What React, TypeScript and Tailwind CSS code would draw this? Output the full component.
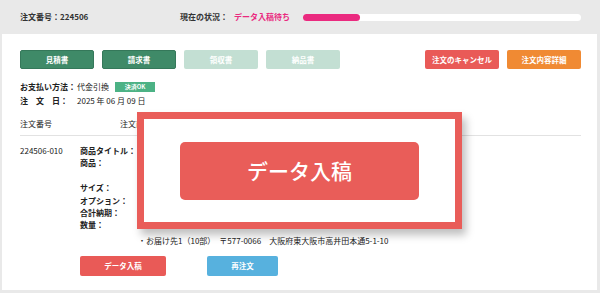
import React from 'react'

const font = { fontFamily: '"Noto Sans CJK JP", "Noto Sans", sans-serif' }

function DocButton({ label, className }: { label: string; className: string }) {
  return (
    <div
      className={`flex h-[19px] w-[74px] items-center justify-center rounded-[2px] text-[7.5px] font-bold text-white ${className}`}
    >
      {label}
    </div>
  )
}

export default function App() {
  return (
    <div
      className="relative flex h-[293px] w-[600px] flex-col bg-[#e9e9e9] text-[#222]"
      style={font}
    >
      {/* Status header */}
      <div className="flex h-[34px] shrink-0 items-center pl-[20px] pr-[19px] text-[8px] font-bold text-[#333]">
        <div className="w-[160px]">注文番号：224506</div>
        <div>現在の状況：</div>
        <div className="ml-[6px] text-[#ea2a7f]">データ入稿待ち</div>
        <div className="ml-[13px] h-[7px] flex-1 rounded-full bg-white">
          <div className="h-full w-[57px] rounded-full bg-[#ea2a7f]" />
        </div>
      </div>

      {/* Order panel */}
      <div className="mb-[3px] ml-[2px] mr-[3px] flex-1 bg-white pl-[18px] pr-[16px] pt-[16px] text-[8px]">
        <div className="flex items-center">
          <div className="flex gap-[8px]">
            <DocButton label="見積書" className="border border-[#35785a] bg-[#3f8a68]" />
            <DocButton label="請求書" className="border border-[#35785a] bg-[#3f8a68]" />
            <DocButton label="領収書" className="bg-[#c3dfd3]" />
            <DocButton label="納品書" className="bg-[#c3dfd3]" />
          </div>
          <div className="ml-auto flex gap-[8px]">
            <DocButton label="注文のキャンセル" className="bg-[#e95a57]" />
            <DocButton label="注文内容詳細" className="bg-[#f08a33]" />
          </div>
        </div>

        <div className="mt-[11px] leading-[14px]">
          <div className="flex items-center">
            <span className="w-[57px] font-bold">お支払い方法：</span>
            <span>代金引換</span>
            <span className="ml-[6px] flex h-[10px] w-[40px] items-center justify-center bg-[#4cb285] text-[6px] font-bold leading-none text-white">
              決済OK
            </span>
          </div>
          <div className="flex">
            <span className="w-[57px] font-bold">注　文　日：</span>
            <span>2025 年 06 月 09 日</span>
          </div>
        </div>

        <div className="mt-[9px] flex border-b border-[#e2e2e2] pb-[4px] leading-[14px]">
          <span className="w-[100px]">注文番号</span>
          <span>注文商品</span>
        </div>

        <div className="mt-[9px] flex leading-[12.4px]">
          <span className="w-[60px]">224506-010</span>
          <div className="font-bold">
            <div>商品タイトル：</div>
            <div>商品：</div>
            <div>&nbsp;</div>
            <div>サイズ：</div>
            <div>オプション：</div>
            <div>合計納期：</div>
            <div>数量：</div>
          </div>
        </div>

        <div className="ml-[118px] mt-[3px] leading-[12px]">
          ・お届け先1（10部）　〒577-0066　大阪府東大阪市高井田本通5-1-10
        </div>

        <div className="ml-[60px] mt-[9px] flex gap-[41px]">
          <div className="flex h-[20px] w-[86px] items-center justify-center rounded-[2px] bg-[#e95a57] text-[7.5px] font-bold text-white">
            データ入稿
          </div>
          <div className="flex h-[20px] w-[71px] items-center justify-center rounded-[2px] bg-[#57b1de] text-[7.5px] font-bold text-white">
            再注文
          </div>
        </div>
      </div>

      {/* Highlight callout */}
      <div className="absolute left-[137px] top-[112px] flex h-[117px] w-[325px] items-center justify-center border-[7px] border-[#e95d59] bg-white shadow-[4px_6px_8px_rgba(0,0,0,0.25)]">
        <div className="flex h-[58px] w-[239px] items-center justify-center rounded-[5px] bg-[#e95d59] text-[21px] font-medium text-white">
          データ入稿
        </div>
      </div>
    </div>
  )
}
